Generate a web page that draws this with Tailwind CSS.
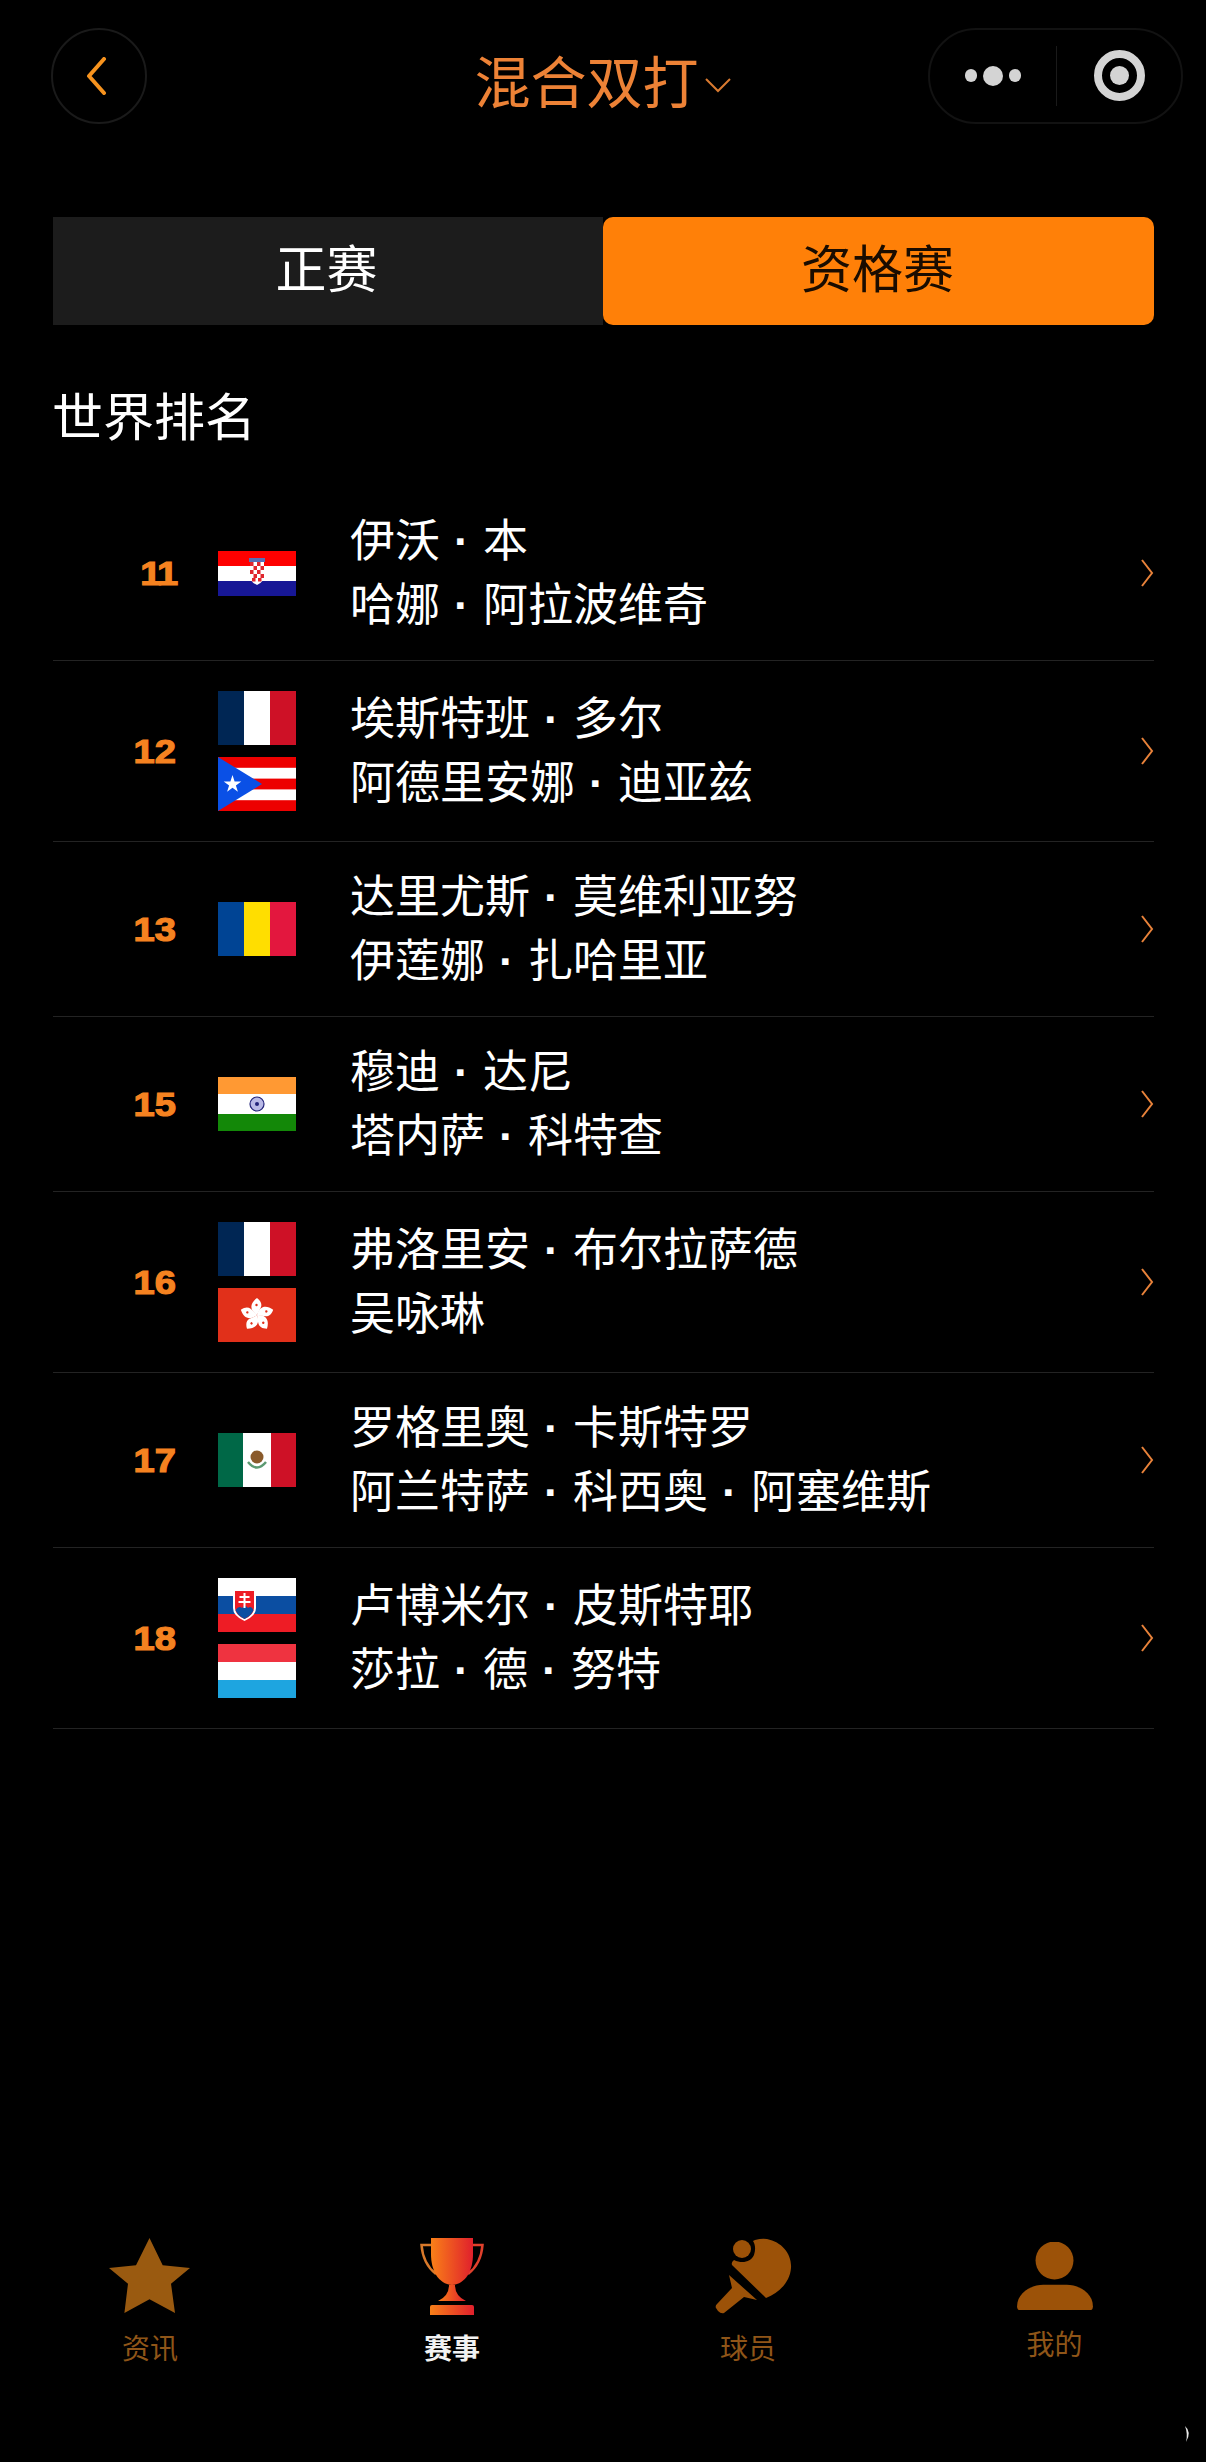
<!DOCTYPE html>
<html lang="zh"><head><meta charset="utf-8">
<script src="https://cdn.jsdelivr.net/npm/@tailwindcss/browser@4"></script>
</head>
<body class="bg-black">
<div class="relative w-[1206px] h-[2462px] bg-black flex flex-col overflow-hidden text-white font-['Noto_Sans_CJK_SC','Liberation_Sans',sans-serif]">

<header class="grid grid-cols-[1fr_auto_1fr] items-center px-[23px] pt-[27px] h-[124px]">
  <div class="pl-[28px]">
    <div class="w-[96px] h-[96px] rounded-full border-2 border-[#1a1a1a] flex items-center justify-center">
      <svg width="22" height="38" viewBox="0 0 22 38" class="mr-[7px]"><path d="M19 2 L4 19 L19 36" fill="none" stroke="#f7931e" stroke-width="4" stroke-linecap="round" stroke-linejoin="round"/></svg>
    </div>
  </div>
  <div class="flex items-center pt-[6px]">
    <span class="text-[56px] leading-[76px] text-[#ed8236]">混合双打</span>
    <svg width="28" height="16" viewBox="0 0 28 16" class="ml-[5px] mt-[13px]"><path d="M2 2 L14 14 L26 2" fill="none" stroke="#d97a30" stroke-width="2"/></svg>
  </div>
  <div class="flex justify-end">
    <div class="w-[255px] h-[96px] rounded-full border-2 border-[#121212] flex items-center">
      <div class="w-[126px] flex items-center justify-center gap-[6px]">
        <span class="w-[12px] h-[13px] rounded-full bg-[#d4d4d4]"></span>
        <span class="w-[20px] h-[20px] rounded-full bg-[#d4d4d4]"></span>
        <span class="w-[12px] h-[13px] rounded-full bg-[#d4d4d4]"></span>
      </div>
      <div class="w-px h-[60px] bg-[#1a1a1a]"></div>
      <div class="flex-1 flex items-center justify-center">
        <div class="w-[51px] h-[51px] rounded-full border-[8px] border-[#d4d4d4] flex items-center justify-center">
          <span class="w-[19px] h-[19px] rounded-full bg-[#d4d4d4]"></span>
        </div>
      </div>
    </div>
  </div>
</header>

<main class="pl-[53px]">
  <div class="mt-[93px] flex h-[108px] w-[1101px]">
    <div class="w-[550px] bg-[#1c1c1c] flex items-center justify-center text-[51px] pb-[10px] pr-[3px]">正赛</div>
    <div class="w-[551px] bg-[#ff8008] rounded-[10px] flex items-center justify-center text-[51px] pb-[10px] pr-[2px] text-[#1a0c00]">资格赛</div>
  </div>
  <h2 class="mt-[53px] -ml-[1px] text-[51px] leading-[72px] font-normal">世界排名</h2>

  <ul class="mt-[36px] w-[1101px]">

    <li class="flex items-center h-[175px] border-b border-[#232323]">
      <div class="w-[123px] text-right"><span class="inline-block origin-right scale-x-[1.12] text-[34px] font-bold tracking-[-2px] text-[#f58220] [-webkit-text-stroke:1.2px_#f58220] font-['Liberation_Sans',sans-serif]">11</span></div>
      <div class="ml-[42px] w-[78px] flex flex-col gap-[12px]">
        <svg width="78" height="45" viewBox="0 0 78 45" class="block"><rect width="78" height="15" fill="#fe0000"/><rect y="15" width="78" height="15" fill="#fff"/><rect y="30" width="78" height="15" fill="#171796"/><path d="M31 7 h16 v4 h-16z" fill="#5a6fb5"/><path d="M32 11 H46 V25 Q46 31 39 34 Q32 31 32 25Z" fill="#fff"/><g fill="#e0262e"><rect x="32" y="11" width="3.5" height="4"/><rect x="39" y="11" width="3.5" height="4"/><rect x="35.5" y="15" width="3.5" height="4"/><rect x="42.5" y="15" width="3.5" height="4"/><rect x="32" y="19" width="3.5" height="4"/><rect x="39" y="19" width="3.5" height="4"/><rect x="35.5" y="23" width="3.5" height="4"/><rect x="42.5" y="23" width="3.5" height="4"/><rect x="34" y="27" width="3.5" height="3.5"/><rect x="40" y="27" width="3.5" height="3.5"/></g></svg>
      </div>
      <div class="ml-[54px] pt-[2px] flex-1 text-[45px] leading-[64.5px] [word-spacing:1.5px] font-['Liberation_Sans','Noto_Sans_CJK_SC',sans-serif]"><p>伊沃 <b>·</b> 本</p><p>哈娜 <b>·</b> 阿拉波维奇</p></div>
      <svg width="14" height="30" viewBox="0 0 14 30"><path d="M2 2 L12 15 L2 28" fill="none" stroke="#e8823a" stroke-width="2"/></svg>
    </li>

    <li class="flex items-center h-[181px] border-b border-[#232323]">
      <div class="w-[123px] text-right"><span class="inline-block origin-right scale-x-[1.12] text-[34px] font-bold text-[#f58220] [-webkit-text-stroke:1.2px_#f58220] font-['Liberation_Sans',sans-serif]">12</span></div>
      <div class="ml-[42px] w-[78px] flex flex-col gap-[12px]">
        <svg width="78" height="54" viewBox="0 0 78 54" class="block"><rect width="26" height="54" fill="#002654"/><rect x="26" width="26" height="54" fill="#fff"/><rect x="52" width="26" height="54" fill="#ce1126"/></svg>
        <svg width="78" height="54" viewBox="0 0 78 54" class="block"><rect width="78" height="54" fill="#ed0000"/><rect y="10.8" width="78" height="10.8" fill="#fff"/><rect y="32.4" width="78" height="10.8" fill="#fff"/><path d="M0 0 L44 27 L0 54Z" fill="#0a50e6"/><path d="M14.5 18 L16.6 24.4 L23.3 24.4 L17.9 28.4 L19.9 34.8 L14.5 30.8 L9.1 34.8 L11.1 28.4 L5.7 24.4 L12.4 24.4Z" fill="#fff"/></svg>
      </div>
      <div class="ml-[54px] pt-[2px] flex-1 text-[45px] leading-[64.5px] [word-spacing:1.5px] font-['Liberation_Sans','Noto_Sans_CJK_SC',sans-serif]"><p>埃斯特班 <b>·</b> 多尔</p><p>阿德里安娜 <b>·</b> 迪亚兹</p></div>
      <svg width="14" height="30" viewBox="0 0 14 30"><path d="M2 2 L12 15 L2 28" fill="none" stroke="#e8823a" stroke-width="2"/></svg>
    </li>

    <li class="flex items-center h-[175px] border-b border-[#232323]">
      <div class="w-[123px] text-right"><span class="inline-block origin-right scale-x-[1.12] text-[34px] font-bold text-[#f58220] [-webkit-text-stroke:1.2px_#f58220] font-['Liberation_Sans',sans-serif]">13</span></div>
      <div class="ml-[42px] w-[78px] flex flex-col gap-[12px]">
        <svg width="78" height="54" viewBox="0 0 78 54" class="block"><rect width="26" height="54" fill="#004494"/><rect x="26" width="26" height="54" fill="#ffde00"/><rect x="52" width="26" height="54" fill="#e3173e"/></svg>
      </div>
      <div class="ml-[54px] pt-[2px] flex-1 text-[45px] leading-[64.5px] [word-spacing:1.5px] font-['Liberation_Sans','Noto_Sans_CJK_SC',sans-serif]"><p>达里尤斯 <b>·</b> 莫维利亚努</p><p>伊莲娜 <b>·</b> 扎哈里亚</p></div>
      <svg width="14" height="30" viewBox="0 0 14 30"><path d="M2 2 L12 15 L2 28" fill="none" stroke="#e8823a" stroke-width="2"/></svg>
    </li>

    <li class="flex items-center h-[175px] border-b border-[#232323]">
      <div class="w-[123px] text-right"><span class="inline-block origin-right scale-x-[1.12] text-[34px] font-bold text-[#f58220] [-webkit-text-stroke:1.2px_#f58220] font-['Liberation_Sans',sans-serif]">15</span></div>
      <div class="ml-[42px] w-[78px] flex flex-col gap-[12px]">
        <svg width="78" height="54" viewBox="0 0 78 54" class="block"><rect width="78" height="17" fill="#ff9933"/><rect y="17" width="78" height="20" fill="#fff"/><rect y="37" width="78" height="17" fill="#138808"/><circle cx="39" cy="27" r="7" fill="#b9b9e6" stroke="#23237a" stroke-width="1.2"/><circle cx="39" cy="27" r="2" fill="#23237a"/></svg>
      </div>
      <div class="ml-[54px] pt-[2px] flex-1 text-[45px] leading-[64.5px] [word-spacing:1.5px] font-['Liberation_Sans','Noto_Sans_CJK_SC',sans-serif]"><p>穆迪 <b>·</b> 达尼</p><p>塔内萨 <b>·</b> 科特查</p></div>
      <svg width="14" height="30" viewBox="0 0 14 30"><path d="M2 2 L12 15 L2 28" fill="none" stroke="#e8823a" stroke-width="2"/></svg>
    </li>

    <li class="flex items-center h-[181px] border-b border-[#232323]">
      <div class="w-[123px] text-right"><span class="inline-block origin-right scale-x-[1.12] text-[34px] font-bold text-[#f58220] [-webkit-text-stroke:1.2px_#f58220] font-['Liberation_Sans',sans-serif]">16</span></div>
      <div class="ml-[42px] w-[78px] flex flex-col gap-[12px]">
        <svg width="78" height="54" viewBox="0 0 78 54" class="block"><rect width="26" height="54" fill="#002654"/><rect x="26" width="26" height="54" fill="#fff"/><rect x="52" width="26" height="54" fill="#ce1126"/></svg>
        <svg width="78" height="54" viewBox="0 0 78 54" class="block"><rect width="78" height="54" fill="#e1301a"/><g><g><path d="M39 27 C31 22 32 15 39 10 C43 13 44 16 43 19 C42 22 40 24 39 27Z" fill="#fff"/><circle cx="38.500" cy="17" r="1.200" fill="#e1301a"/></g><g transform="rotate(72 39 27)"><path d="M39 27 C31 22 32 15 39 10 C43 13 44 16 43 19 C42 22 40 24 39 27Z" fill="#fff"/><circle cx="38.500" cy="17" r="1.200" fill="#e1301a"/></g><g transform="rotate(144 39 27)"><path d="M39 27 C31 22 32 15 39 10 C43 13 44 16 43 19 C42 22 40 24 39 27Z" fill="#fff"/><circle cx="38.500" cy="17" r="1.200" fill="#e1301a"/></g><g transform="rotate(216 39 27)"><path d="M39 27 C31 22 32 15 39 10 C43 13 44 16 43 19 C42 22 40 24 39 27Z" fill="#fff"/><circle cx="38.500" cy="17" r="1.200" fill="#e1301a"/></g><g transform="rotate(288 39 27)"><path d="M39 27 C31 22 32 15 39 10 C43 13 44 16 43 19 C42 22 40 24 39 27Z" fill="#fff"/><circle cx="38.500" cy="17" r="1.200" fill="#e1301a"/></g></g></svg>
      </div>
      <div class="ml-[54px] pt-[2px] flex-1 text-[45px] leading-[64.5px] [word-spacing:1.5px] font-['Liberation_Sans','Noto_Sans_CJK_SC',sans-serif]"><p>弗洛里安 <b>·</b> 布尔拉萨德</p><p>吴咏琳</p></div>
      <svg width="14" height="30" viewBox="0 0 14 30"><path d="M2 2 L12 15 L2 28" fill="none" stroke="#e8823a" stroke-width="2"/></svg>
    </li>

    <li class="flex items-center h-[175px] border-b border-[#232323]">
      <div class="w-[123px] text-right"><span class="inline-block origin-right scale-x-[1.12] text-[34px] font-bold text-[#f58220] [-webkit-text-stroke:1.2px_#f58220] font-['Liberation_Sans',sans-serif]">17</span></div>
      <div class="ml-[42px] w-[78px] flex flex-col gap-[12px]">
        <svg width="78" height="54" viewBox="0 0 78 54" class="block"><rect width="25" height="54" fill="#006847"/><rect x="25" width="28" height="54" fill="#fff"/><rect x="53" width="25" height="54" fill="#ce1126"/><circle cx="39" cy="24" r="6.500" fill="#8a5a2b"/><path d="M30 29 Q39 40 48 29" fill="none" stroke="#5c9a72" stroke-width="2.500"/></svg>
      </div>
      <div class="ml-[54px] pt-[2px] flex-1 text-[45px] leading-[64.5px] [word-spacing:1.5px] font-['Liberation_Sans','Noto_Sans_CJK_SC',sans-serif]"><p>罗格里奥 <b>·</b> 卡斯特罗</p><p>阿兰特萨 <b>·</b> 科西奥 <b>·</b> 阿塞维斯</p></div>
      <svg width="14" height="30" viewBox="0 0 14 30"><path d="M2 2 L12 15 L2 28" fill="none" stroke="#e8823a" stroke-width="2"/></svg>
    </li>

    <li class="flex items-center h-[181px] border-b border-[#232323]">
      <div class="w-[123px] text-right"><span class="inline-block origin-right scale-x-[1.12] text-[34px] font-bold text-[#f58220] [-webkit-text-stroke:1.2px_#f58220] font-['Liberation_Sans',sans-serif]">18</span></div>
      <div class="ml-[42px] w-[78px] flex flex-col gap-[12px]">
        <svg width="78" height="54" viewBox="0 0 78 54" class="block"><rect width="78" height="18" fill="#fff"/><rect y="18" width="78" height="18" fill="#0b4ea2"/><rect y="36" width="78" height="18" fill="#ee1c25"/><path d="M15 12 Q15 11 16 11 H37 Q38 11 38 12 V30 Q38 38 26.5 43 Q15 38 15 30Z" fill="#fff"/><path d="M17 13 H36 V30 Q36 37 26.5 41 Q17 37 17 30Z" fill="#ee1c25"/><path d="M17.5 32 Q21 27 24 30 Q27 26 30 30 Q33 27 35.5 32 Q34 37 26.5 41 Q19 37 17.5 32Z" fill="#0b4ea2"/><path d="M25.5 15 h2 v3 h4 v2 h-4 v3 h5 v2 h-5 v5 h-2 v-5 h-5 v-2 h5 v-3 h-4 v-2 h4z" fill="#fff"/></svg>
        <svg width="78" height="54" viewBox="0 0 78 54" class="block"><rect width="78" height="18" fill="#ef3340"/><rect y="18" width="78" height="18" fill="#fff"/><rect y="36" width="78" height="18" fill="#1ea5e0"/></svg>
      </div>
      <div class="ml-[54px] pt-[2px] flex-1 text-[45px] leading-[64.5px] [word-spacing:1.5px] font-['Liberation_Sans','Noto_Sans_CJK_SC',sans-serif]"><p>卢博米尔 <b>·</b> 皮斯特耶</p><p>莎拉 <b>·</b> 德 <b>·</b> 努特</p></div>
      <svg width="14" height="30" viewBox="0 0 14 30"><path d="M2 2 L12 15 L2 28" fill="none" stroke="#e8823a" stroke-width="2"/></svg>
    </li>
  </ul>
</main>

<nav class="mt-auto h-[224px] flex items-start">
  <div class="w-[300px] flex flex-col items-center">
    <svg width="82" height="76" viewBox="0 0 82 76"><path d="M40.500 0 L53.700 27.300 L81 30 L62 45.700 L66 75 L40.500 61.300 L15.400 75 L19 45.700 L0 30 L27 27.300Z" fill="#9a5a10"/></svg>
    <span class="text-[28px] leading-[40px] mt-[13px] text-[#8f5518]">资讯</span>
  </div>
  <div class="w-[304px] flex flex-col items-center">
    <svg width="64" height="77" viewBox="0 0 64 77"><defs><linearGradient id="tr" x1="0" x2="1" y1="0" y2="0"><stop offset="0" stop-color="#f98018"/><stop offset="1" stop-color="#e0202c"/></linearGradient></defs><path d="M11 7 H1.500 Q3 26 16 36" fill="none" stroke="#d9792a" stroke-width="2.500"/><path d="M53 7 H62.500 Q61 26 48 36" fill="none" stroke="#e0402c" stroke-width="2.500"/><path d="M11 0 H53 V16 C53 32 46 46 32 47 C18 46 11 32 11 16Z" fill="url(#tr)"/><path d="M29 47 H35 Q35 58 46 63 H18 Q29 58 29 47Z" fill="url(#tr)"/><path d="M12 67 H52 Q54 67 54 69 V77 H10 V69 Q10 67 12 67Z" fill="url(#tr)"/></svg>
    <span class="text-[28px] leading-[40px] mt-[12px] font-bold text-[#f2f2f2]">赛事</span>
  </div>
  <div class="w-[288px] flex flex-col items-center">
    <svg width="78" height="76" viewBox="0 0 78 76" fill="#9c5208" class="ml-[11px]"><circle cx="27" cy="11" r="9"/><path d="M40 2 Q47 0 52 1 C67 4 77 16 76 30 C75 44 64 55 51 60 L17 27 Q16 24 19 22 C27 26 36 24 39 17 C41 11 40 6 38 3Z"/><path d="M14 37 L42 62 L29 59 L9 75 Q6 76 3 73 L1 70 Q0 68 2 66 L17 50Z"/></svg>
    <span class="text-[28px] leading-[40px] mt-[13px] text-[#8f5518]">球员</span>
  </div>
  <div class="w-[314px] pl-[11px] flex flex-col items-center">
    <svg width="76" height="70" viewBox="0 0 78 72" class="mt-[4px]" fill="#9c5208"><circle cx="38.500" cy="19" r="19.500"/><path d="M0 66 C0 52 15 44 27 44 H51 C63 44 78 52 78 66 Q78 70 75 70 H3 Q0 70 0 66Z"/></svg>
    <span class="text-[28px] leading-[40px] mt-[11px] text-[#8f5518]">我的</span>
  </div>
</nav>

<svg width="8" height="16" viewBox="0 0 8 16" class="absolute left-[1184px] top-[2426px]"><path d="M1 0 Q8 6 2 16 Q4 8 1 0Z" fill="#e8e8e8"/></svg>
</div>
</body></html>
